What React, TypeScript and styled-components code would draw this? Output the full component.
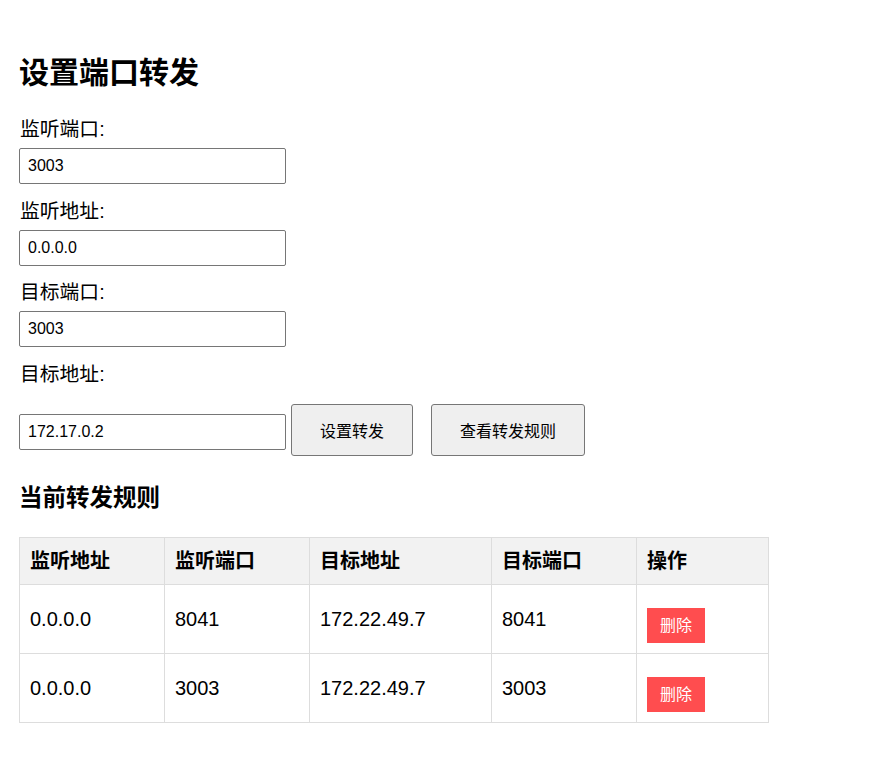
import React from "react";
import styled, { createGlobalStyle } from "styled-components";

const GlobalStyle = createGlobalStyle`
  html, body {
    margin: 0;
    padding: 0;
    background: #ffffff;
  }
  body {
    font-family: "Liberation Sans", "Noto Sans CJK SC", sans-serif;
    color: #000000;
    font-size: 20px;
  }
`;

const Page = styled.div`
  padding: 55px 19px 40px 19px;
`;

const Title = styled.h1`
  margin: 0 0 26px;
  font-size: 30px;
  font-weight: 700;
  line-height: 36px;
`;

const Form = styled.div`
  display: flex;
  flex-direction: column;
  align-items: flex-start;
`;

const Label = styled.label`
  display: block;
  font-size: 19.8px;
  line-height: 24px;
  margin: 0 0 7px 1px;
`;

const TextInput = styled.input<{ $inline?: boolean }>`
  box-sizing: border-box;
  width: 267px;
  height: 36px;
  padding: 0 8px;
  border: 1px solid #767676;
  border-radius: 2px;
  background: #ffffff;
  color: #000000;
  font-family: "Liberation Sans", "Noto Sans CJK SC", sans-serif;
  font-size: 16px;
  margin: ${(p) => (p.$inline ? "10px 0 0 0" : "0 0 14.65px 0")};
  outline: none;
`;

const ActionRow = styled.div`
  display: flex;
  align-items: flex-start;
  margin-top: 11px;
`;

const ActionButton = styled.button<{ $gap: number }>`
  box-sizing: border-box;
  height: 52px;
  padding: 0 28px;
  margin-left: ${(p) => p.$gap}px;
  border: 1px solid #767676;
  border-radius: 3px;
  background: #efefef;
  color: #000000;
  font-family: "Liberation Sans", "Noto Sans CJK SC", sans-serif;
  font-size: 16px;
  cursor: pointer;
`;

const SectionTitle = styled.h3`
  margin: 28px 0 25px;
  font-size: 23.5px;
  font-weight: 700;
  line-height: 28px;
`;

const RulesTable = styled.table`
  border-collapse: collapse;
  table-layout: fixed;
  width: 750px;
`;

const HeadCell = styled.th<{ $w?: number }>`
  width: ${(p) => (p.$w ? `${p.$w}px` : "auto")};
  background: #f2f2f2;
  border: 1px solid #dddddd;
  padding: 10px;
  text-align: left;
  font-size: 20px;
  font-weight: 700;
  line-height: 26px;
  box-sizing: border-box;
`;

const Cell = styled.td`
  border: 1px solid #dddddd;
  padding: 10px;
  font-size: 20px;
  line-height: 24px;
  vertical-align: middle;
`;

const DeleteButton = styled.button`
  display: block;
  margin-top: 13px;
  height: 35px;
  padding: 0 13px;
  border: none;
  border-radius: 0;
  background: #ff4d4f;
  color: #ffffff;
  font-family: "Liberation Sans", "Noto Sans CJK SC", sans-serif;
  font-size: 16px;
  line-height: 35px;
  cursor: pointer;
`;

const rules = [
  { listenAddr: "0.0.0.0", listenPort: "8041", targetAddr: "172.22.49.7", targetPort: "8041" },
  { listenAddr: "0.0.0.0", listenPort: "3003", targetAddr: "172.22.49.7", targetPort: "3003" },
];

export default function App() {
  return (
    <>
      <GlobalStyle />
      <Page>
        <Title>设置端口转发</Title>
        <Form>
          <Label>监听端口:</Label>
          <TextInput defaultValue="3003" />
          <Label>监听地址:</Label>
          <TextInput defaultValue="0.0.0.0" />
          <Label>目标端口:</Label>
          <TextInput defaultValue="3003" />
          <Label>目标地址:</Label>
          <ActionRow>
            <TextInput $inline defaultValue="172.17.0.2" />
            <ActionButton $gap={5}>设置转发</ActionButton>
            <ActionButton $gap={18}>查看转发规则</ActionButton>
          </ActionRow>
        </Form>
        <SectionTitle>当前转发规则</SectionTitle>
        <RulesTable>
          <thead>
            <tr>
              <HeadCell $w={145}>监听地址</HeadCell>
              <HeadCell $w={145}>监听端口</HeadCell>
              <HeadCell $w={182}>目标地址</HeadCell>
              <HeadCell $w={145}>目标端口</HeadCell>
              <HeadCell>操作</HeadCell>
            </tr>
          </thead>
          <tbody>
            {rules.map((r, i) => (
              <tr key={i}>
                <Cell>{r.listenAddr}</Cell>
                <Cell>{r.listenPort}</Cell>
                <Cell>{r.targetAddr}</Cell>
                <Cell>{r.targetPort}</Cell>
                <Cell>
                  <DeleteButton>删除</DeleteButton>
                </Cell>
              </tr>
            ))}
          </tbody>
        </RulesTable>
      </Page>
    </>
  );
}
